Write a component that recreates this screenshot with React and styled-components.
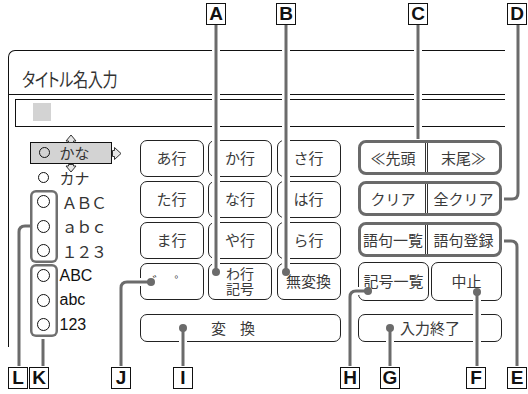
import React from 'react'
import styled, { createGlobalStyle } from 'styled-components'

const GlobalStyle = createGlobalStyle`
  body {
    margin: 0;
    background: #fff;
  }
`

const JP = `"Noto Sans CJK JP", "Noto Sans", sans-serif`
const LINE = '#6b6b6b'

const Root = styled.div`
  position: relative;
  width: 528px;
  height: 394px;
  padding: 50px 0 0 8px;
  box-sizing: border-box;
  background: #fff;
  overflow: hidden;
  font-family: ${JP};
  color: #333;
`

const Panel = styled.div`
  width: 497px;
  height: 297px;
  box-sizing: border-box;
  border-top: 1.5px solid #111;
  border-left: 1.5px solid #111;
  border-top-left-radius: 7px;
`

const TitleRow = styled.div`
  height: 44px;
  box-sizing: border-box;
  border-bottom: 1.5px solid #111;
  display: flex;
  align-items: flex-end;
  padding: 0 0 2px 13px;
`

const Title = styled.span`
  display: inline-block;
  font-size: 19px;
  font-feature-settings: "palt";
  letter-spacing: -0.5px;
  transform: scaleX(0.8);
  transform-origin: left center;
  white-space: nowrap;
  color: #333;
`

const InputBox = styled.div`
  margin: 3.5px 0 0 5.5px;
  height: 28px;
  box-sizing: border-box;
  border: 1.5px solid #111;
  border-right: none;
  display: flex;
  align-items: flex-start;
`

const Cursor = styled.span`
  margin: 3.5px 0 0 17.5px;
  width: 18px;
  height: 18px;
  background: #d3d3d3;
`

const Body = styled.div`
  display: flex;
  padding-top: 13px;
`

const ModeList = styled.div`
  margin: 2px 0 0 20.5px;
  width: 110px;
  display: flex;
  flex-direction: column;
`

const ModeRow = styled.div`
  position: relative;
  display: flex;
  align-items: center;
  height: ${p => (p.$active ? 22 : 24)}px;
  width: ${p => (p.$active ? '82px' : 'auto')};
  margin-bottom: ${p => (p.$active ? 2 : 0)}px;
  box-sizing: border-box;
  border: ${p => (p.$active ? '1px solid #111' : 'none')};
  background: ${p => (p.$active ? '#d3d3d3' : 'transparent')};
  font-size: 15px;
`

const SmallCell = styled.span`
  width: ${p => (p.$active ? 27 : 28)}px;
  display: flex;
  justify-content: center;
`

const SmallCircle = styled.span`
  width: 11px;
  height: 11px;
  box-sizing: border-box;
  border: 1.3px solid #111;
  border-radius: 50%;
`

const ModeLabel = styled.span`
  margin-left: 2px;
  line-height: 1;
`

const Arrows = styled.svg`
  position: absolute;
  left: -1px;
  top: -10px;
  overflow: visible;
`

const Group = styled.div`
  display: flex;
  margin-top: ${p => p.$gap || 0}px;
`

const CircleCol = styled.div`
  width: 28px;
  border-radius: 6px;
  box-shadow: inset 0 0 0 2.5px #707070;
  display: flex;
  flex-direction: column;
`

const CircleCell = styled.span`
  height: 24.5px;
  display: flex;
  align-items: center;
  justify-content: center;
`

const BigCircle = styled.span`
  width: 13px;
  height: 13px;
  box-sizing: border-box;
  border: 1.4px solid #111;
  border-radius: 50%;
`

const LabelCol = styled.div`
  display: flex;
  flex-direction: column;
  margin-left: ${p => (p.$wide ? 4 : 2)}px;
`

const GroupLabel = styled.span`
  height: 24.5px;
  display: flex;
  align-items: center;
  font-family: ${p => (p.$wide ? JP : `"Liberation Sans", Arial, sans-serif`)};
  font-size: 16px;
  letter-spacing: ${p => (p.$wide ? -1.3 : 0)}px;
  color: ${p => (p.$wide ? '#333' : '#111')};
`

const KeyArea = styled.div`
  display: flex;
  flex-direction: column;
`

const KeyGrid = styled.div`
  display: grid;
  grid-template-columns: repeat(3, 64px);
  grid-auto-rows: 37px;
  column-gap: 4.5px;
  row-gap: 4px;
`

const Key = styled.div`
  box-sizing: border-box;
  border: 1.3px solid #222;
  border-radius: 7px;
  background: #fff;
  display: flex;
  align-items: center;
  justify-content: center;
  text-align: center;
  font-size: ${p => p.$size || 15}px;
  line-height: ${p => (p.$stack ? 1.1 : 1.2)};
  letter-spacing: ${p => p.$spread || 0}px;
  height: ${p => (p.$h ? `${p.$h}px` : 'auto')};
  margin-top: ${p => p.$mt || 0}px;
  color: #3a3a3a;
`

const RightArea = styled.div`
  margin-left: 17.5px;
  width: 144px;
  display: flex;
  flex-direction: column;
`

const Pair = styled.div`
  height: 35px;
  margin-bottom: ${p => p.$mb}px;
  box-sizing: border-box;
  border: 3px solid #6a6a6a;
  border-radius: 8px;
  display: flex;
`

const PairHalf = styled.div`
  flex: ${p => (p.$second ? '0 0 71px' : '1')};
  display: flex;
  align-items: center;
  justify-content: center;
  font-size: 15px;
  white-space: nowrap;
  border-left: ${p => (p.$second ? '3.5px double #333' : 'none')};
  color: #3a3a3a;
`

const KeyRow = styled.div`
  display: flex;
  gap: 2px;
  height: 39px;
  & > * {
    flex: 1;
  }
`

const Overlay = styled.svg`
  position: absolute;
  left: 0;
  top: 0;
  pointer-events: none;
`

const Tag = styled.div`
  position: absolute;
  left: ${p => p.$x}px;
  top: ${p => p.$y}px;
  width: 20px;
  height: 22px;
  box-sizing: border-box;
  border: 1.2px solid #111;
  background: #fff;
  display: flex;
  align-items: center;
  justify-content: center;
  font-family: "Liberation Sans", Arial, sans-serif;
  font-weight: 700;
  font-size: 19px;
  color: #111;
`

const leaders = [
  { d: 'M216 25 V272', dot: [216, 272] },
  { d: 'M286 25 V272', dot: [286, 272] },
  { d: 'M418 25 V139' },
  { d: 'M518 25 V193 Q518 199 512 199 H504' },
  { d: 'M517 366 V247 Q517 241 511 241 H504' },
  { d: 'M477 366 V292', dot: [477, 292] },
  { d: 'M390 366 V328', dot: [390, 328] },
  { d: 'M350 366 V297 Q350 291 356 291 H368', dot: [368, 291] },
  { d: 'M183 366 V328', dot: [183, 328] },
  { d: 'M121 366 V288 Q121 282 127 282 H151', dot: [151, 282] },
  { d: 'M43 366 V339' },
  { d: 'M19 366 V232 Q19 226 25 226 H30' },
]

const tags = [
  ['A', 206, 3], ['B', 276, 3], ['C', 408, 3], ['D', 507, 3],
  ['L', 8, 367], ['K', 29, 367], ['J', 111, 367], ['I', 173, 367],
  ['H', 340, 367], ['G', 380, 367], ['F', 466, 367], ['E', 507, 367],
]

const kanaKeys = ['あ行', 'か行', 'さ行', 'た行', 'な行', 'は行', 'ま行', 'や行', 'ら行']

export default function App() {
  return (
    <Root>
      <GlobalStyle />
      <Panel>
        <TitleRow>
          <Title>タイトル名入力</Title>
        </TitleRow>
        <InputBox>
          <Cursor />
        </InputBox>
        <Body>
          <ModeList>
            <ModeRow $active>
              <SmallCell $active><SmallCircle /></SmallCell>
              <ModeLabel>かな</ModeLabel>
              <Arrows width="95" height="42" viewBox="0 0 95 42">
                <g fill="#e6e6e6" stroke="#333" strokeWidth="1" strokeLinejoin="round">
                  <path d="M36 8 L41 2 L46 8 L43.5 8 L43.5 9.5 L38.5 9.5 L38.5 8 Z" />
                  <path d="M38.5 31.5 L43.5 31.5 L43.5 33 L46 33 L41 39 L36 33 L38.5 33 Z" />
                  <path d="M82.5 17.5 L84.5 17.5 L84.5 14.5 L91 20.5 L84.5 26.5 L84.5 23.5 L82.5 23.5 Z" />
                </g>
              </Arrows>
            </ModeRow>
            <ModeRow>
              <SmallCell><SmallCircle /></SmallCell>
              <ModeLabel>カナ</ModeLabel>
            </ModeRow>
            <Group>
              <CircleCol>
                <CircleCell><BigCircle /></CircleCell>
                <CircleCell><BigCircle /></CircleCell>
                <CircleCell><BigCircle /></CircleCell>
              </CircleCol>
              <LabelCol $wide>
                <GroupLabel $wide>ＡＢＣ</GroupLabel>
                <GroupLabel $wide>ａｂｃ</GroupLabel>
                <GroupLabel $wide>１２３</GroupLabel>
              </LabelCol>
            </Group>
            <Group $gap={0.5}>
              <CircleCol>
                <CircleCell><BigCircle /></CircleCell>
                <CircleCell><BigCircle /></CircleCell>
                <CircleCell><BigCircle /></CircleCell>
              </CircleCol>
              <LabelCol>
                <GroupLabel>ABC</GroupLabel>
                <GroupLabel>abc</GroupLabel>
                <GroupLabel>123</GroupLabel>
              </LabelCol>
            </Group>
          </ModeList>

          <KeyArea>
            <KeyGrid>
              {kanaKeys.map(k => (
                <Key key={k}>{k}</Key>
              ))}
              <Key $size={13} $spread={3}>゛ ゜</Key>
              <Key $stack $size={14}>わ行<br />記号</Key>
              <Key>無変換</Key>
            </KeyGrid>
            <Key $h={28} $mt={14} $spread={14}>変換</Key>
          </KeyArea>

          <RightArea>
            <Pair $mb={6}>
              <PairHalf>≪先頭</PairHalf>
              <PairHalf $second>末尾≫</PairHalf>
            </Pair>
            <Pair $mb={6}>
              <PairHalf>クリア</PairHalf>
              <PairHalf $second>全クリア</PairHalf>
            </Pair>
            <Pair $mb={5}>
              <PairHalf>語句一覧</PairHalf>
              <PairHalf $second>語句登録</PairHalf>
            </Pair>
            <KeyRow>
              <Key>記号一覧</Key>
              <Key>中止</Key>
            </KeyRow>
            <Key $h={28} $mt={13}>入力終了</Key>
          </RightArea>
        </Body>
      </Panel>

      <Overlay width="528" height="394" viewBox="0 0 528 394">
        <g fill="none" strokeLinecap="butt">
          {leaders.map((l, i) => (
            <path key={`h${i}`} d={l.d} stroke="#fff" strokeWidth="8" />
          ))}
          {leaders.map((l, i) => (
            <path key={`l${i}`} d={l.d} stroke={LINE} strokeWidth="3" />
          ))}
        </g>
        {leaders.filter(l => l.dot).map((l, i) => (
          <circle key={`d${i}`} cx={l.dot[0]} cy={l.dot[1]} r="4" fill={LINE} />
        ))}
      </Overlay>

      {tags.map(([t, x, y]) => (
        <Tag key={t} $x={x} $y={y}>{t}</Tag>
      ))}
    </Root>
  )
}
